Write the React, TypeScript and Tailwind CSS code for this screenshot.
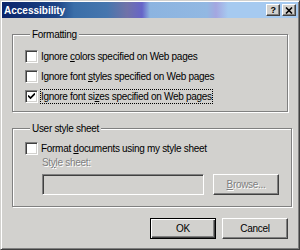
import type { ReactNode } from "react";

const font = "font-['Liberation_Sans',Arial,sans-serif]";

function CheckBox({ checked = false }: { checked?: boolean }) {
  return (
    <span className="flex h-[13px] w-[13px] shrink-0 items-center justify-center border border-t-[#808080] border-l-[#808080] border-b-white border-r-white bg-white shadow-[inset_1px_1px_0_#404040,inset_-1px_-1px_0_#d2d1ce]">
      {checked && (
        <svg width="7" height="7" viewBox="0 0 7 7">
          <path d="M0 2.5 L2.5 5 L7 0.5" stroke="#000" strokeWidth="1.7" fill="none" />
        </svg>
      )}
    </span>
  );
}

function CheckRow({ children, checked, focused }: { children: ReactNode; checked?: boolean; focused?: boolean }) {
  return (
    <div className="flex h-[15px] items-center gap-[2px]">
      <CheckBox checked={checked} />
      <span
        className={
          focused
            ? "border border-dotted border-black leading-[13px]"
            : "border border-transparent leading-[13px]"
        }
      >
        {children}
      </span>
    </div>
  );
}

function Group({ title, children, className }: { title: string; children: ReactNode; className?: string }) {
  return (
    <fieldset
      className={
        "border border-[#808080] shadow-[inset_1px_1px_0_#fff,1px_1px_0_#fff] " + (className ?? "")
      }
    >
      <legend className="ml-[5px] bg-[#d2d1ce] px-[2px] leading-[13px]">{title}</legend>
      {children}
    </fieldset>
  );
}

function Button({ children, isDefault, disabled }: { children: ReactNode; isDefault?: boolean; disabled?: boolean }) {
  const frame = isDefault
    ? "border border-black shadow-[inset_1px_1px_0_#fff,inset_-1px_-1px_0_#404040,inset_-2px_-2px_0_#808080]"
    : "border border-t-white border-l-white border-b-[#404040] border-r-[#404040] shadow-[inset_-1px_-1px_0_#808080]";
  return (
    <div
      className={
        "flex h-[21px] w-[66px] items-center justify-center " +
        frame +
        (disabled ? " text-[#808080] [text-shadow:1px_1px_0_#fff]" : " text-black")
      }
    >
      {children}
    </div>
  );
}

export default function App() {
  return (
    <div
      className={
        "h-[250px] w-[300px] border border-t-[#d2d1ce] border-l-[#d2d1ce] border-b-[#404040] border-r-[#404040] bg-[#d2d1ce] p-px text-[10px] tracking-[-0.3px] text-black shadow-[inset_1px_1px_0_#fff,inset_-1px_-1px_0_#808080] " +
        font
      }
    >
      <div className="flex h-[16px] items-center justify-between bg-[linear-gradient(90deg,#0a246a_0px,#1c4486_55px,#3a6ea8_72px,#4676ae_105px,#7072a8_125px,#6664c8_140px,#8cb4e0_148px,#92b8e2_205px,#a4a6e0_214px,#a6caf0_226px,#a6caf0_100%)] pl-[2px] pr-[2px]">
        <span className="text-[10px] font-bold tracking-normal text-white">Accessibility</span>
        <div className="flex gap-[2px]">
          <div className="flex h-[12px] w-[14px] items-center justify-center border border-t-white border-l-white border-b-[#404040] border-r-[#404040] bg-[#d2d1ce] text-[9px] font-bold leading-none shadow-[inset_-1px_-1px_0_#808080]">
            ?
          </div>
          <div className="flex h-[12px] w-[14px] items-center justify-center border border-t-white border-l-white border-b-[#404040] border-r-[#404040] bg-[#d2d1ce] shadow-[inset_-1px_-1px_0_#808080]">
            <svg width="8" height="7" viewBox="0 0 8 7">
              <path d="M1 0.5 L7 6.5 M7 0.5 L1 6.5" stroke="#000" strokeWidth="1.6" />
            </svg>
          </div>
        </div>
      </div>

      <div className="px-[10px]">
        <Group title="Formatting" className="mt-[10px] px-[12px] pb-[7px] pt-[8px]">
          <div className="flex flex-col gap-[5px]">
            <CheckRow>
              Ignore <u>c</u>olors specified on Web pages
            </CheckRow>
            <CheckRow>
              Ignore font <u>s</u>tyles specified on Web pages
            </CheckRow>
            <CheckRow checked focused>
              Ignore font si<u>z</u>es specified on Web pages
            </CheckRow>
          </div>
        </Group>

        <Group title="User style sheet" className="mt-[10px] px-[12px] pb-[11px] pt-[6px]">
          <CheckRow>
            Format <u>d</u>ocuments using my style sheet
          </CheckRow>
          <div className="ml-[17px] leading-[13px] text-[#808080] [text-shadow:1px_1px_0_#fff]">
            St<u>y</u>le sheet:
          </div>
          <div className="ml-[17px] mt-[5px] flex gap-[9px]">
            <div className="h-[21px] w-[162px] border border-t-[#808080] border-l-[#808080] border-b-white border-r-white bg-[#d2d1ce] shadow-[inset_1px_1px_0_#404040,inset_-1px_-1px_0_#d2d1ce]" />
            <Button disabled>
              <span>
                <u>B</u>rowse...
              </span>
            </Button>
          </div>
        </Group>

        <div className="mt-[11px] flex justify-end gap-[6px]">
          <Button isDefault>OK</Button>
          <Button>Cancel</Button>
        </div>
      </div>
    </div>
  );
}
